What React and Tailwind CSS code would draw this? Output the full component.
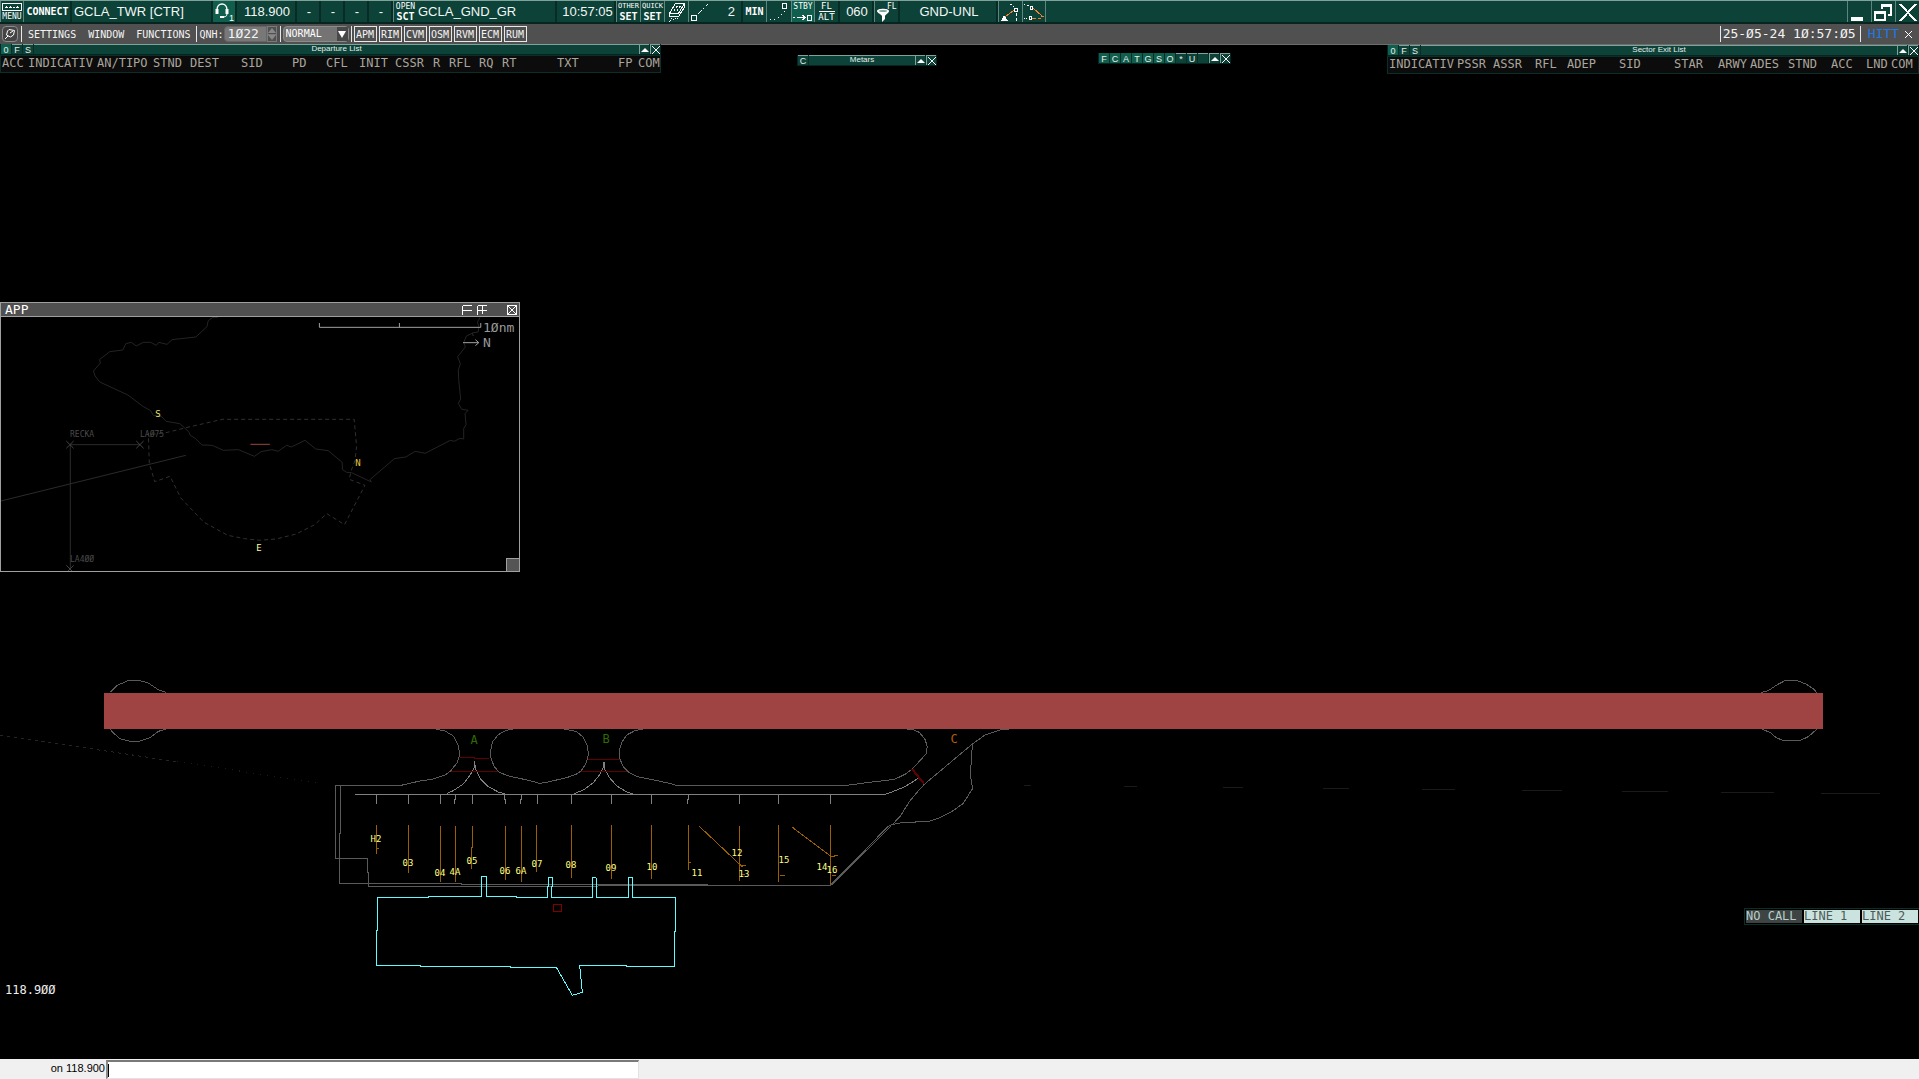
import React from "react";

const MONO = "font-['DejaVu_Sans_Mono','Liberation_Mono',monospace]";
const SANS = "font-['Liberation_Sans',Arial,sans-serif]";

/* ---------- top bar ---------- */

function Field({ className = "", children }) {
  return (
    <div className={`flex h-full shrink-0 items-center border-r-2 border-[#082b25] ${SANS} text-[13px] text-[#f2f7f5] ${className}`}>
      {children}
    </div>
  );
}

function BarButton({ label, active, className = "", children }) {
  return (
    <button
      type="button"
      aria-label={label}
      className={`flex h-full w-6 shrink-0 flex-col items-center justify-center overflow-hidden border-l border-[#5d877e] text-white ${MONO} ${active ? "bg-[#105f4e]" : ""} ${className}`}
    >
      {children}
    </button>
  );
}

function Stack({ top, bottom, topClass = "text-[8px]", bottomClass = "text-[10px] font-bold" }) {
  return (
    <>
      <span className={`h-[9px] leading-[9px] ${topClass}`}>{top}</span>
      <span className={`h-[11px] leading-[11px] ${bottomClass}`}>{bottom}</span>
    </>
  );
}

function Icon({ children, w = 22, h = 20 }) {
  return (
    <svg width={w} height={h} viewBox={`0 0 ${w} ${h}`} fill="none" stroke="white" shapeRendering="crispEdges" className="shrink-0">
      {children}
    </svg>
  );
}

function TopBar() {
  return (
    <div className="flex h-6 items-stretch overflow-hidden border-t border-b-2 border-t-[#7fa39a] border-b-[#06251f] bg-[#0d4238]">
      <BarButton label="Menu" className="border-r">
        <Icon h={8} w={20}>
          <path d="M.5.5h19v7H.5zM3 4h3M7 4h3M11 4h2M14 4h3M4.500 3v2M8.500 3v2M15.500 3v2" />
        </Icon>
        <span className="h-[10px] text-[8px] leading-[12px]">MENU</span>
      </BarButton>
      <button type="button" className={`w-12 shrink-0 border-r-2 border-[#082b25] pl-px text-[10px] font-bold text-white ${MONO}`}>CONNECT</button>
      <Field className="w-[141px] pl-[2px]">GCLA_TWR [CTR]</Field>
      <button type="button" aria-label="Voice channel 1" className="flex w-[22px] shrink-0 items-center bg-[#105f4e]">
        <svg width="22" height="20" viewBox="0 0 22 20" fill="none" stroke="white">
          <path d="M4 8C4 0 14 0 14 8" strokeWidth="1.500" />
          <path d="M4 7v5M14 7v5" strokeWidth="3" />
          <path d="M14 12c0 3-3 3-5 3" />
          <path d="M7 15h4" strokeWidth="2" />
          <text x="16" y="19" fontSize="9" fill="white" stroke="none" fontFamily="Liberation Sans">1</text>
        </svg>
      </button>
      <Field className="w-[62px] justify-center border-l-2 pl-[2px]">118.900</Field>
      <Field className="w-6 justify-center pl-[2px]">-</Field>
      <Field className="w-6 justify-center pl-[2px]">-</Field>
      <Field className="w-6 justify-center pl-[2px]">-</Field>
      <Field className="w-6 justify-center pl-[2px]">-</Field>
      <BarButton label="Open sector"><Stack top="OPEN" bottom="SCT" /></BarButton>
      <Field className="w-[140px] pl-px">GCLA_GND_GR</Field>
      <Field className="w-[59px] justify-center pl-1">10:57:05</Field>
      <BarButton label="Other settings"><Stack top="OTHER" bottom="SET" topClass="text-[7px]" /></BarButton>
      <BarButton label="Quick settings"><Stack top="QUICK" bottom="SET" topClass="text-[7px]" /></BarButton>
      <BarButton label="Erase">
        <Icon>
          <path d="M9.500 1.500H18.500L12.500 11.500H3.500ZM3.500 11.500V14.500H12.500L18.500 5V1.500" />
          <path d="M8 9L12 3M11 9L15 3" strokeDasharray="2 2" />
          <path d="M5 16h1M9 16h1M4 18h1M7 17h1M3 19h1M11 16h1" />
        </Icon>
      </BarButton>
      <BarButton label="Distance line">
        <Icon>
          <path d="M1.500 13.500h5v5h-5z" />
          <path d="M8 12L18 2" strokeDasharray="5 2 2 2" />
        </Icon>
      </BarButton>
      <Field className="w-[31px] justify-end pr-[6px]">2</Field>
      <button type="button" className={`w-6 shrink-0 border-r border-[#5d877e] text-[10px] font-bold text-white ${MONO}`}>MIN</button>
      <button type="button" aria-label="Track dots" className="flex w-6 shrink-0 items-center justify-center">
        <Icon>
          <path d="M14.500 1.500h4v5h-4z" />
          <path d="M2 17h1M6 17h1M10 15h1M13 12h1M16 9h1" />
        </Icon>
      </button>
      <BarButton label="Standby" active className="w-[23px]">
        <span className="h-[10px] text-[8px] leading-[10px]">STBY</span>
        <Icon h={10}>
          <path d="M1 5h2M5 5.500h8M10.500 3l2.500 2.500L10.500 8M15.500 3.500h4v5h-4z" />
        </Icon>
      </BarButton>
      <BarButton label="Flight level or altitude" className="border-l">
        <span className="w-4 border-b border-white text-[9px] leading-[10px]">FL</span>
        <span className="text-[9px] leading-[10px]">ALT</span>
      </BarButton>
      <Field className="w-9 justify-center border-l-2 pl-[2px]">060</Field>
      <BarButton label="Level filter">
        <svg width="22" height="20" viewBox="0 0 22 20" fill="white">
          <path d="M1 9c0-3 12-3 12 0 0 2-3 3-4 5v3l-3 3v-6c-1-2-5-3-5-5z" />
          <ellipse cx="7" cy="9" rx="4" ry="1" fill="#7fa39a" />
          <text x="11" y="7" fontSize="8" fontFamily="DejaVu Sans Mono">FL</text>
        </svg>
      </BarButton>
      <Field className="w-[100px] justify-center border-l-2 pl-[2px]">GND-UNL</Field>
      <BarButton label="Route draw">
        <Icon>
          <path d="M5 15L14 8" stroke="#f08030" />
          <path d="M14.500 6.500h3v3h-3z" />
          <path d="M16.500 11v8M10 2h2M13 4h1" strokeDasharray="3 2" />
          <path d="M1 19l3-6 4 6z" fill="white" stroke="none" />
        </Icon>
      </BarButton>
      <BarButton label="Conflict prediction" className="border-r">
        <Icon>
          <path d="M10 6l9 8M9 16h4M15 16h3M18 14h3" stroke="#f08030" />
          <path d="M7.500 4.500h2v3h-2zM6.500 14.500h2v3h-2zM1 2h1M4 3h2M1 16h1M3 16h1" />
        </Icon>
      </BarButton>
      <div className="flex-1" />
      <BarButton label="Minimize">
        <Icon><path d="M2 17h12" strokeWidth="4" /></Icon>
      </BarButton>
      <BarButton label="Restore">
        <Icon>
          <path d="M1 10h12M8 3.500h11" strokeWidth="3" />
          <path d="M2 10v8h10v-8M9 5v2M18 4v9h-3" strokeWidth="2" />
        </Icon>
      </BarButton>
      <BarButton label="Close">
        <Icon><path d="M3 2l16 17M19 2L3 19" strokeWidth="2" /></Icon>
      </BarButton>
    </div>
  );
}

/* ---------- menu bar ---------- */

const Divider = () => <span className="h-4 w-px shrink-0 bg-[#e8e8e8]" />;

function MenuBar() {
  return (
    <div className={`flex h-5 items-center bg-[#505050] text-[10px] text-[#f4f4f4] ${MONO}`}>
      <button type="button" aria-label="Pin toolbar" className="ml-[2px] mr-[3px] flex h-4 w-4 items-center justify-center rounded-sm border border-[#8b8b8b] bg-[#444]">
        <svg width="12" height="12" viewBox="0 0 12 12" fill="none" stroke="white">
          <path d="M5 1.500l5.500 1-1 4.500-3 2-4-2 1-4zM4 8l-3 3M6 5l3-2" />
        </svg>
      </button>
      <Divider />
      <button type="button" className="ml-[6px]">SETTINGS</button>
      <button type="button" className="ml-3">WINDOW</button>
      <button type="button" className="ml-3">FUNCTIONS</button>
      <span className="ml-[6px] flex"><Divider /></span>
      <label htmlFor="qnh" className="ml-[2px]">QNH:</label>
      <input id="qnh" defaultValue="1Ø22" className="h-4 w-[43px] rounded-l-sm border border-[#666] bg-[#787878] pl-[3px] text-[13px] text-[#f4f4f4] outline-none" />
      <span className="mr-[3px] flex h-4 w-[10px] flex-col border border-[#7a7a7a]">
        <button type="button" aria-label="Increase QNH" className="flex flex-1 items-center justify-center border-b border-[#7a7a7a]">
          <svg width="8" height="5" viewBox="0 0 8 5" fill="#888"><path d="M4 0l4 5H0z" /></svg>
        </button>
        <button type="button" aria-label="Decrease QNH" className="flex flex-1 items-center justify-center">
          <svg width="8" height="5" viewBox="0 0 8 5" fill="#888"><path d="M4 5l4-5H0z" /></svg>
        </button>
      </span>
      <Divider />
      <span className="relative mx-[2px] flex h-4 w-[66px]">
        <select aria-label="Mode" className="h-4 w-full appearance-none rounded-sm border border-[#8b8b8b] bg-[#747474] pl-[2px] text-[10px] leading-[14px] text-white outline-none">
          <option>NORMAL</option>
        </select>
        <span className="pointer-events-none absolute right-px top-px flex h-[14px] w-[11px] items-center justify-center bg-[#484848]">
          <svg width="8" height="7" viewBox="0 0 8 7" fill="white"><path d="M0 0h8L4 7z" /></svg>
        </span>
      </span>
      <Divider />
      <div className="ml-[2px] flex gap-[2px]">
        {["APM", "RIM", "CVM", "OSM", "RVM", "ECM", "RUM"].map((m) => (
          <button key={m} type="button" className="flex h-4 w-[23px] items-center justify-center border border-[#e8e8e8]">{m}</button>
        ))}
      </div>
      <div className="flex-1" />
      <Divider />
      <span className="pl-[2px] pr-1 text-[13px]">25-Ø5-24 1Ø:57:Ø5</span>
      <Divider />
      <span className="ml-[7px] text-[13px] text-[#1c7ae0]">HITT</span>
      <button type="button" aria-label="Close toolbar" className="ml-[5px] mr-[6px]">
        <svg width="9" height="9" viewBox="0 0 9 9" stroke="white" shapeRendering="crispEdges"><path d="M1 1l7 7M8 1L1 8" /></svg>
      </button>
    </div>
  );
}

/* ---------- list windows ---------- */

function Flag({ on, children }) {
  return (
    <button
      type="button"
      aria-label={children || "blank"}
      className={`mr-px h-[10px] w-[10px] shrink-0 border-t text-center text-[9px] leading-[8px] text-[#e6eeeb] ${on ? "border-[#105f4e] bg-[#105f4e]" : "border-[#7fa39a] bg-[#0d4238]"}`}
    >
      {children}
    </button>
  );
}

function TitleBar({ flags, title }) {
  return (
    <div className={`flex h-[11px] border-b border-x border-[#06251f] bg-[#082e27] ${SANS}`}>
      {flags.map(([t, on], i) => <Flag key={i} on={on}>{t}</Flag>)}
      {title !== undefined && (
        <div className="flex-1 border-t border-[#7fa39a] bg-[#0d4238] text-center text-[8px] leading-[7px] text-[#e6eeeb]">{title}</div>
      )}
      <button type="button" aria-label="Collapse" className="flex h-[10px] w-[10px] items-center justify-center border-l border-t border-[#7fa39a] bg-[#0d4238]">
        <svg width="8" height="4" viewBox="0 0 8 4" fill="white"><path d="M4 0l4 4H0z" /></svg>
      </button>
      <button type="button" aria-label="Close" className="ml-px flex h-[10px] w-[10px] items-center justify-center border-l border-t border-[#7fa39a] bg-[#0d4238]">
        <svg width="8" height="8" viewBox="0 0 8 8" stroke="white" shapeRendering="crispEdges"><path d="M0 0l8 8M8 0L0 8" /></svg>
      </button>
    </div>
  );
}

function ColumnHeads({ columns }) {
  return (
    <table className={`w-full table-fixed border-collapse bg-[#0c0c0c] text-[12px] text-[#aaa59d] ${MONO}`}>
      <colgroup>
        {columns.map(([name, w]) => <col key={name} style={{ width: w }} />)}
      </colgroup>
      <thead>
        <tr>
          {columns.map(([name]) => (
            <th key={name} scope="col" className="whitespace-nowrap p-0 pb-[2px] text-left align-top font-normal leading-[14px]">{name}</th>
          ))}
        </tr>
      </thead>
    </table>
  );
}

const LIST_FLAGS = [["0", true], ["F", false], ["S", false]];

const DEPARTURE = [["ACC", 26], ["INDICATIV", 69], ["AN/TIPO", 56], ["STND", 37], ["DEST", 51], ["SID", 51], ["PD", 34], ["CFL", 33], ["INIT", 36], ["CSSR", 38], ["R", 16], ["RFL", 30], ["RQ", 23], ["RT", 55], ["TXT", 61], ["FP", 20], ["COM", 22]];
const SECTOR_EXIT = [["INDICATIV", 68], ["PSSR", 36], ["ASSR", 42], ["RFL", 32], ["ADEP", 52], ["SID", 55], ["STAR", 44], ["ARWY", 32], ["ADES", 38], ["STND", 43], ["ACC", 35], ["LND", 25], ["COM", 27]];

function ListWindow({ title, columns, className }) {
  return (
    <section className={`absolute border-b border-[#0a2f29] ${className}`}>
      <TitleBar flags={LIST_FLAGS} title={title} />
      <div className="border-x border-t border-[#0a2f29] bg-[#0c0c0c] pl-px">
        <ColumnHeads columns={columns} />
      </div>
    </section>
  );
}

/* ---------- approach inset ---------- */

const COAST =
  "651,52 636,52 622,62 618,80 585,111 514,119 499,133 474,127 467,136 450,127 428,127 407,138 392,127 376,131 367,150 328,155 297,179 300,189 279,213 284,228 298,246 382,285 428,320 449,331 458,346 482,349 496,364 537,371 552,384 565,397 568,406 583,415 603,435 634,436 667,451 712,449 760,469 780,455 812,449 831,454 856,436 870,441 911,421 943,447 980,452 1022,487 1023,509 1035,517 1050,518 1109,546 1105,539 1178,476 1212,471 1240,454 1270,460 1345,421 1357,424 1374,415 1385,417 1385,386 1392,374 1389,341 1398,331 1379,328 1369,310 1376,297 1370,238 1369,210 1375,192 1367,170 1390,141 1385,128 1393,108 1410,100 1414,108 1410,99 1428,96 1430,80 1426,66 1434,52";
const ZONE =
  "440,405 443,400 446,490 462,545 508,529 540,594 608,666 680,706 730,716 775,721 825,717 885,702 940,674 976,641 1029,674 1090,556 1043,538 1049,512 1060,482 1065,440 1058,358 664,358 552,384 492,399 446,404";

function AppWindow() {
  return (
    <section className="absolute left-0 top-[258px] w-[520px] border border-[#a0a0a0] bg-black">
      <header className={`flex h-[14px] items-center border-b border-[#a0a0a0] bg-[#505050] pl-1 pr-[2px] text-[13px] leading-[13px] text-white ${MONO}`}>
        <h2 className="flex-1">APP</h2>
        {[["Shrink", "M.5.5v9M.5.500h9M.500 5.500h9", "mr-[5px]"], ["Grow", "M.5.5v9M.5.500h9M.500 5.500h9M5.500 0v9", "mr-5"], ["Close", "M.5.5h9v9h-9zM1 1l8 8M9 1L1 9", ""]].map(([label, d, cls]) => (
          <button key={label} type="button" aria-label={label} className={cls}>
            <svg width="10" height="10" viewBox="0 0 10 10" fill="none" stroke="white" shapeRendering="crispEdges"><path d={d} /></svg>
          </button>
        ))}
      </header>
      <svg viewBox="1 317 518 254" className="block w-full" fontFamily="DejaVu Sans Mono">
        <g transform="translate(0 300) scale(.3348 .3333)" fill="none" stroke="#2b2b2b" shapeRendering="crispEdges">
          <g className="[&>*]:[vector-effect:non-scaling-stroke]">
            <polyline points={COAST} stroke="#242424" />
            <polyline points={ZONE} strokeDasharray="4 3" stroke="#303030" />
            <path d="M210 434H418M210 434V806M3 603L555 466" />
            <path d="M198 423l22 22M220 423l-22 22M407 423l22 22M429 423l-22 22M198 796l22 22M220 796l-22 22" stroke="#444" />
            <path d="M748 433H806" stroke="#a04343" />
            <path d="M954 69V82H1436V69M1193 69V82M1383 128H1430M1420 119l10 9-10 9" stroke="#a0a0a0" />
          </g>
        </g>
        <g fill="#4a4a4a" fontSize="8">
          <text x="70" y="437">RECKA</text>
          <text x="140" y="437">LAØ75</text>
          <text x="70" y="562">LA4ØØ</text>
        </g>
        <g fill="#9a9a9a" fontSize="13">
          <text x="483" y="332">1Ønm</text>
          <text x="483" y="347">N</text>
        </g>
        <g fontSize="9" textAnchor="middle">
          <text x="158" y="417" fill="#e8e860">S</text>
          <text x="358" y="466" fill="#e8c040">N</text>
          <text x="259" y="551" fill="#ffffa0">E</text>
        </g>
      </svg>
      <span className="absolute bottom-0 right-0 h-[13px] w-[13px] border-l border-t border-[#a0a0a0] bg-[#555]" />
    </section>
  );
}

/* ---------- ground map ---------- */

const STANDS = [
  ["H2", 376, 842], ["03", 408, 866], ["04", 440, 876], ["4A", 455, 875], ["05", 472, 864], ["06", 505, 874],
  ["6A", 521, 874], ["07", 537, 867], ["08", 571, 868], ["09", 611, 871], ["10", 652, 870], ["11", 697, 876],
  ["12", 737, 856], ["13", 744, 877], ["15", 784, 863], ["14", 822, 870], ["16", 832, 873],
];

const S = "[&_*]:[vector-effect:non-scaling-stroke]";

function GroundMap() {
  return (
    <svg viewBox="0 44 1919 1015" className={`absolute inset-0 h-full w-full ${S}`} fill="none" fontFamily="DejaVu Sans Mono" role="img" aria-label="Airport ground map">
      <g shapeRendering="crispEdges">
        <g transform="translate(90 670) scale(.33333)" stroke="#5a5a5a">
          <path d="M61 66L80 47 98 39 115 31H145L175 39 205 59 228 67M61 178L68 187 90 206 120 214H148L180 203 205 184 228 178" />
          <path d="M-270 195L260 275" stroke="#242424" strokeDasharray="3 4" />
          <path d="M260 275L677 337" stroke="#1c1c1c" strokeDasharray="1 6" />
          <path d="M940 346H737V565H832V609H836V649H1524M752 346V492H749V640H1116V643H1524" />
        </g>
        <g transform="translate(1700 660) scale(.33333)" stroke="#5a5a5a">
          <path d="M184 97L205 92 230 75 255 62 290 61 320 73 342 88 350 98M187 208L210 217 230 234 255 243H297L325 230 350 208" />
        </g>
        <g stroke="#1a1a1a">
          <path d="M1024 785.500h7M1124 786.500h13M1223 787.500h20M1323 788.500h26M1422 789.500h33M1522 790.500h40M1622 791.500h46M1721 792.500h53M1821 793.500h59" />
        </g>
        <g transform="translate(420 720) scale(.33333)" stroke="#5a5a5a">
          <path d="M-53 195L0 183 40 177 75 165 92 153 112 127 119 105 116 80 100 48 75 33 42 26" />
          <path d="M290 25L258 31 235 44 218 65 212 90 213 115 222 138 235 155 262 167 330 182 358 190 375 188 440 173 470 162 484 152 498 130 505 105 503 80 490 52 470 35 428 26" />
          <path d="M677 25L645 32 620 45 605 68 598 92 600 118 610 140 625 156 652 170 740 188 770 196H1280L1340 188 1424 178 1455 163 1476 148 1518 102 1522 80 1515 58 1498 37 1480 29 1452 26" />
          <path d="M-195 223.500H1392L1410 218 1455 200 1493 176" stroke="#808080" />
          <path d="M80 221L100 212 130 192 150 166 162 145 164 123 166 145 180 175 205 200 235 216 255 222M463 221L490 210 520 188 538 165 549 145 552 127 555 150 570 175 592 199 620 216 638 221" stroke="#808080" />
          <path d="M119 112H165V115H207M93 154H235M504 118H600M484 154H622" stroke="#600000" />
        </g>
        <g transform="translate(320 770) scale(.33333)">
          <path d="M169 73V102M265 73V102M361 73V102M406 73V88H403V102M457 73V102M553 73V88H556V102M605 73V88H601V102M652 73V102M754 73V102M874 73V102M994 73V102M1106 73V88H1102V102M1258 73V102M1375 73V102M1531 73V102" stroke="#808080" />
          <path d="M169 165V252M169 235H177M265 165V309M361 168V336M406 168V336M457 168V234H454V297M556 168V330M604 168V336M649 165V306M754 165V324M874 165V327M994 165V327M1105 165V300M1105 277H1113" stroke="#9a6000" />
          <path d="M834 344H1164" stroke="#5a5a5a" strokeWidth="2" />
          <path d="M1164 346H1532" stroke="#5a5a5a" />
          <path d="M172 382H327V379H485V319H500V379H591V382H683V350H686V322H698V350H695V382H818V322H824L830 325V382H926V322H938V382H1067V486H1064V589H921V586H779L787 667 757 676 709 592H573V589H303V586H170V483H172Z" stroke="#5ffcff" />
          <path d="M700 403H725V425H700Z" stroke="#800000" />
        </g>
        <g transform="translate(660 720) scale(.33333)" stroke="#5a5a5a">
          <path d="M1065 25L1020 30 975 45 937 72 935 110 932 150 933 178 938 205 910 250 875 275 840 293 805 305 730 307 695 314 685 319 510 495M692 319L514 495" />
          <path d="M937 72L793 193 773 215 748 245 722 287 697 314" />
          <path d="M238 318V483M243 463H255M355 315V486M360 466H375M511 315V492M516 466H528M118 319L240 434 246 439 250 436H257M396 321L512 408 520 411 526 406H534" stroke="#9a6000" />
          <path d="M756 147L792 191" stroke="#600000" strokeWidth="2" />
        </g>
        <rect x="104" y="693" width="1719" height="36" fill="#a04343" />
      </g>
      <g fontSize="12" textAnchor="middle">
        <text x="474" y="744" fill="#2f6b00">A</text>
        <text x="606" y="743" fill="#2f6b00">B</text>
        <text x="954" y="743" fill="#b85c00">C</text>
      </g>
      <g fontSize="9" fill="#ffff80" textAnchor="middle">
        {STANDS.map(([name, x, y]) => <text key={name} x={x} y={y}>{name}</text>)}
      </g>
      <text x="5" y="994" fontSize="12" fill="#f0f0f0">118.9ØØ</text>
    </svg>
  );
}

function CallLines() {
  return (
    <div className={`absolute right-0 top-[864px] flex gap-[2px] border-y border-l border-[#0a2f29] p-px text-[12px] leading-[13px] ${MONO}`}>
      <button type="button" className="h-[13px] w-14 bg-[#3d4443] text-left text-[#b9cfca]">NO CALL</button>
      <button type="button" className="h-[13px] w-14 bg-[#cbe3de] text-left text-[#4c5a57]">LINE 1</button>
      <button type="button" className="h-[13px] w-14 bg-[#cbe3de] text-left text-[#4c5a57]">LINE 2</button>
    </div>
  );
}

export default function App() {
  return (
    <div className="flex h-screen flex-col overflow-hidden bg-black">
      <TopBar />
      <MenuBar />
      <main className="relative min-h-0 flex-1">
        <div className="h-px bg-[#6d6d6d]" />
        <GroundMap />
        <ListWindow title="Departure List" columns={DEPARTURE} className="left-0 top-0 w-[661px]" />
        <section className="absolute left-[797px] top-[11px] w-[140px]">
          <TitleBar flags={[["C", false]]} title="Metars" />
        </section>
        <section className="absolute left-[1098px] top-[9px]">
          <TitleBar flags={[["F", true], ["C", true], ["A", true], ["T", true], ["G", true], ["S", true], ["O", true], ["*", false], ["U", false], ["", false]]} />
        </section>
        <ListWindow title="Sector Exit List" columns={SECTOR_EXIT} className="right-0 top-px w-[532px]" />
        <AppWindow />
        <CallLines />
      </main>
      <footer className={`flex h-5 items-start bg-[#f0f0f0] text-[11px] text-black ${SANS}`}>
        <label htmlFor="command" className="w-[106px] pr-px text-right leading-[18px]">on 118.900</label>
        <div className="mt-px flex h-[19px] w-[533px] items-center border-2 border-b border-r border-[#e3e3e3] border-l-[#8a8a8a] border-t-[#7a7a7a] bg-white">
          <span className="h-[13px] w-px bg-black" />
          <input id="command" className="h-full min-w-0 flex-1 bg-transparent outline-none" />
        </div>
      </footer>
    </div>
  );
}
